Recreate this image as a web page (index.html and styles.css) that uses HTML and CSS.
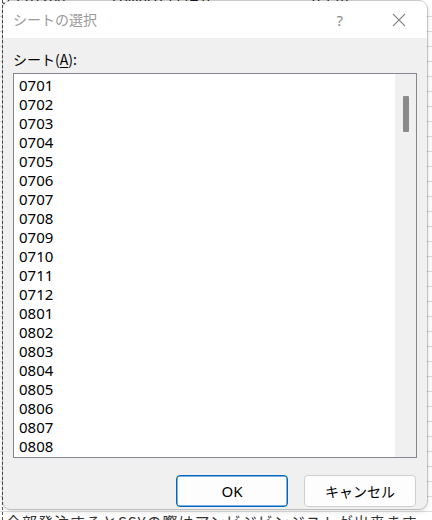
FILE: index.html
```html
<!DOCTYPE html>
<html lang="ja">
<head>
<meta charset="utf-8">
<link rel="stylesheet" href="styles.css">
</head>
<body>
<div class="sheet">
  <div class="sheet-row top-row"><span class="c1">3 1 01200</span><span class="c2">Follinco 1114.0</span><span class="c3">0.1 m</span></div>
  <div class="sheet-rows"></div>
  <div class="sheet-row bottom-row"><span class="c1">全部発注するとSSYの際はアンビジビンジストが出来ます</span></div>
</div>

<div class="dialog">
  <div class="titlebar">
    <span class="title">シートの選択</span>
    <span class="help">?</span>
    <svg class="close" width="14" height="14" viewBox="0 0 14 14"><path d="M1 1 L13 13 M13 1 L1 13" stroke="#8a8a8a" stroke-width="1.1" fill="none"/></svg>
  </div>
  <div class="body">
    <div class="label">シート(<u>A</u>):</div>
    <div class="listbox">
      <ul class="items">
        <li>0701</li><li>0702</li><li>0703</li><li>0704</li><li>0705</li><li>0706</li>
        <li>0707</li><li>0708</li><li>0709</li><li>0710</li><li>0711</li><li>0712</li>
        <li>0801</li><li>0802</li><li>0803</li><li>0804</li><li>0805</li><li>0806</li>
        <li>0807</li><li>0808</li>
      </ul>
      <div class="scrollbar"><div class="thumb"></div></div>
    </div>
    <div class="buttons">
      <button class="btn primary">OK</button>
      <button class="btn">キャンセル</button>
    </div>
  </div>
</div>
</body>
</html>
```

FILE: styles.css
```css
html, body {
  margin: 0;
  padding: 0;
}
body {
  width: 432px;
  height: 520px;
  position: relative;
  overflow: hidden;
  background: #ffffff;
  font-family: "Noto Sans", "Noto Sans CJK JP", sans-serif;
}
.sheet {
  position: absolute;
  inset: 0;
  display: flex;
  flex-direction: column;
  background-image: repeating-linear-gradient(to bottom, transparent 0, transparent 14px, #dcdcdc 14px, #dcdcdc 15px);
  background-position: 0 2px;
}
.sheet::before {
  content: "";
  position: absolute;
  left: 2px;
  top: 0;
  bottom: 0;
  border-left: 1px dashed #555;
}
.sheet-row {
  height: 15px;
  font-size: 14px;
  line-height: 15px;
  color: #222;
  white-space: nowrap;
  display: flex;
}
.top-row {
  margin-top: -9px;
}
.top-row .c1 { width: 110px; padding-left: 2px; }
.top-row .c2 { width: 200px; }
.sheet-rows { flex: 1; }
.bottom-row {
  margin-bottom: -9px;
  font-family: "Noto Sans CJK JP", sans-serif;
  font-size: 15px;
  padding-left: 6px;
  letter-spacing: 1px;
  color: #333;
}

.dialog {
  position: absolute;
  left: 3px;
  top: 1px;
  width: 424px;
  height: 508px;
  border-radius: 8px;
  overflow: hidden;
  background: #f0f0f0;
  box-shadow: 0 0 0 1px rgba(0,0,0,0.18), 0 2px 6px rgba(0,0,0,0.15);
  display: flex;
  flex-direction: column;
}
.titlebar {
  height: 37px;
  background: #ffffff;
  display: flex;
  align-items: center;
  padding-left: 10px;
  padding-right: 21px;
}
.title {
  flex: 1;
  font-family: "Noto Sans CJK JP", sans-serif;
  font-size: 14px;
  color: #9a9a9a;
  margin-top: -1px;
}
.help {
  font-family: "Noto Sans", sans-serif;
  font-size: 15px;
  color: #8a8a8a;
  margin-right: 49px;
}
.close {
  display: block;
}
.body {
  flex: 1;
  display: flex;
  flex-direction: column;
  padding: 11px 10px 0 10px;
}
.label {
  font-family: "Noto Sans CJK JP", sans-serif;
  font-size: 14px;
  line-height: 20px;
  color: #000;
  height: 24px;
}
.label u {
  text-decoration-thickness: 1px;
  text-underline-offset: 2px;
}
.listbox {
  height: 383px;
  border: 1px solid #828790;
  background: #ffffff;
  display: flex;
  width: 402px;
}
.items {
  list-style: none;
  margin: 0;
  padding: 2px 0 0 5px;
  flex: 1;
  overflow: hidden;
}
.items li {
  height: 19px;
  line-height: 19px;
  font-size: 15px;
  color: #000;
  font-family: "Noto Sans", sans-serif;
}
.scrollbar {
  width: 21px;
  background: #f0f0f0;
  padding-top: 22px;
  display: flex;
  justify-content: center;
}
.thumb {
  width: 6px;
  height: 36px;
  background: #8a8a8a;
  border-radius: 1px;
}
.buttons {
  display: flex;
  justify-content: flex-end;
  gap: 16px;
  margin-top: 17px;
  padding-right: 1px;
}
.btn {
  width: 112px;
  height: 32px;
  border: 1px solid #d0d0d0;
  border-radius: 4px;
  background: #fdfdfd;
  font-family: "Noto Sans CJK JP", sans-serif;
  font-size: 14px;
  color: #000;
  padding: 0;
}
.btn.primary {
  border-color: #0067c0;
  box-shadow: inset 0 0 0 0.5px #0067c0;
  font-family: "Noto Sans", sans-serif;
  font-size: 15px;
}
```
